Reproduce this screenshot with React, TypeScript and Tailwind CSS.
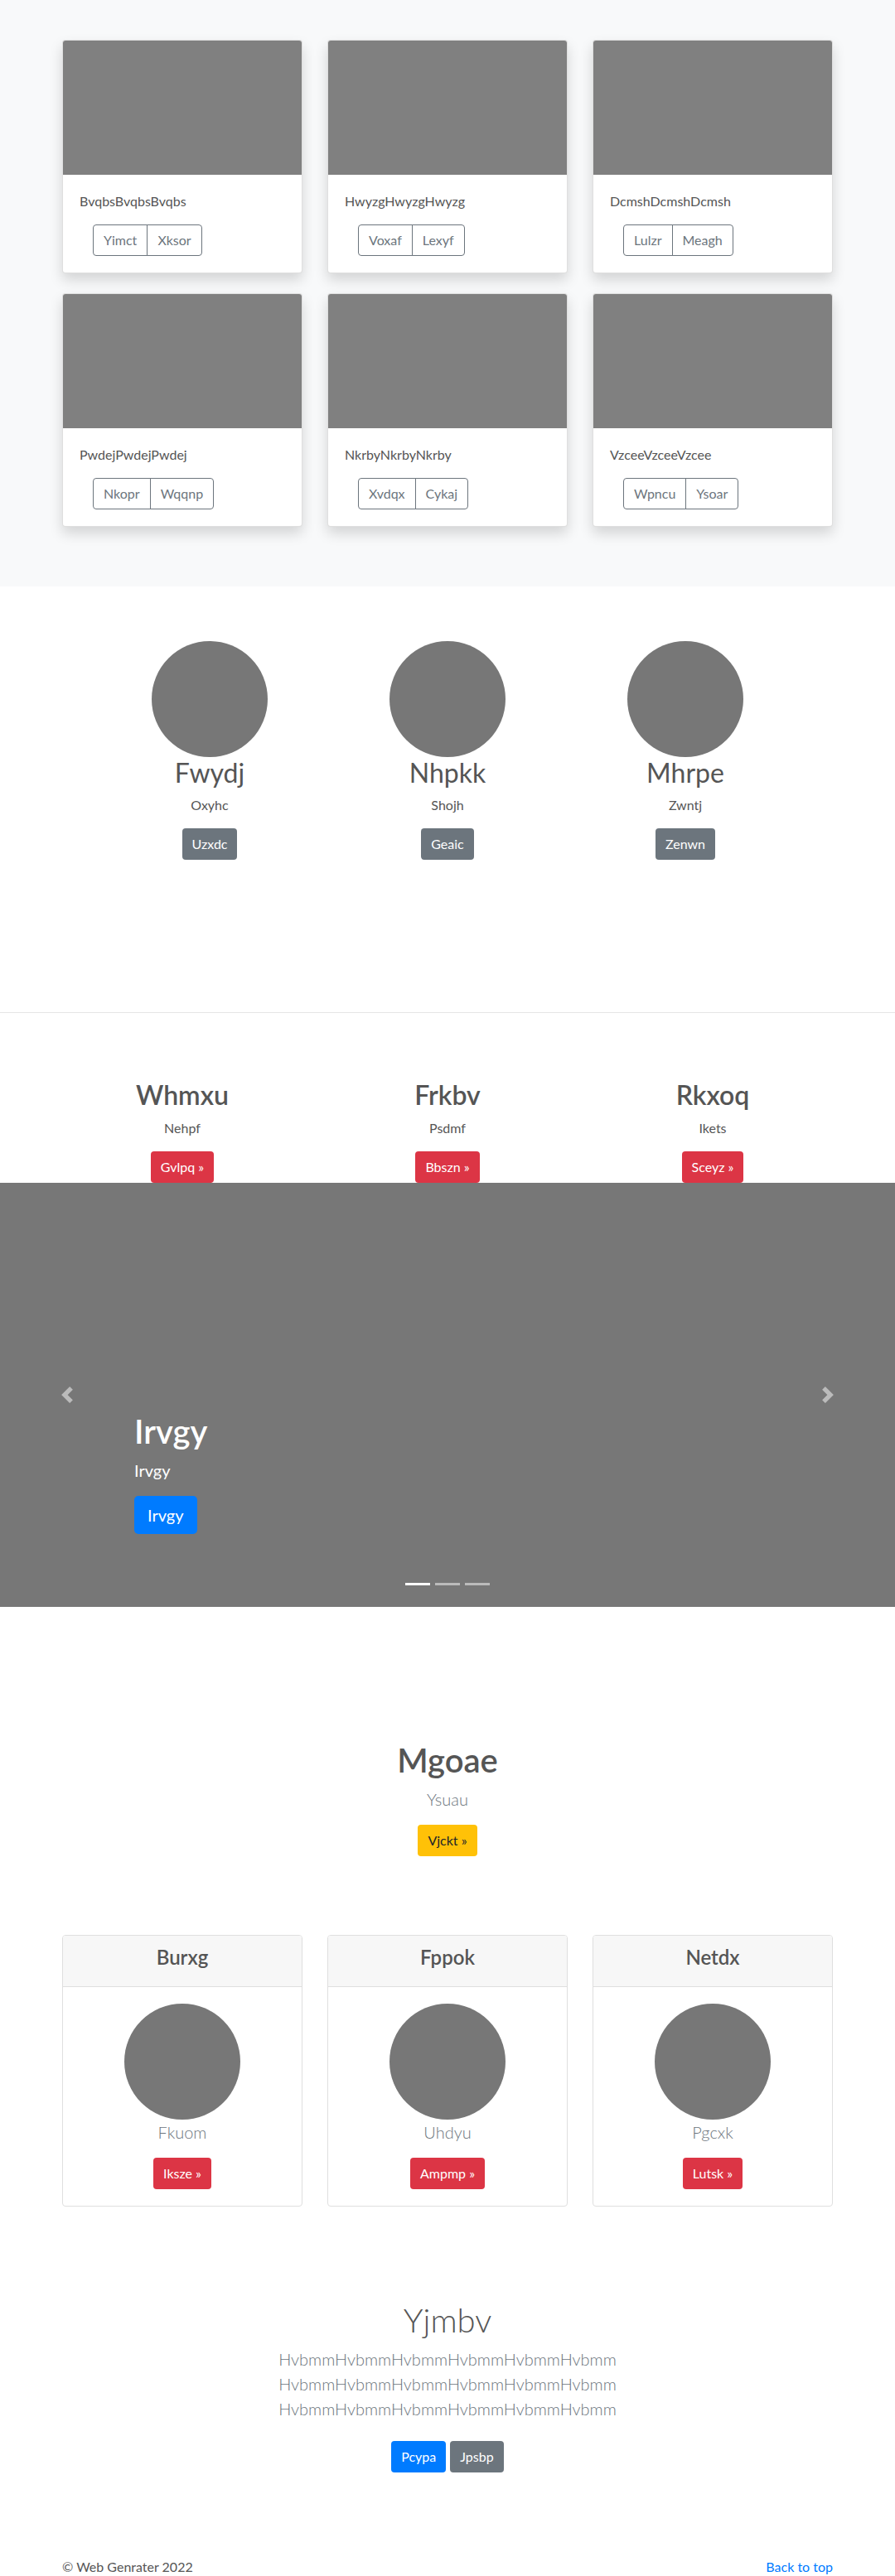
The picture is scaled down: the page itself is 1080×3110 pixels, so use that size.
import React from "react";

const cards1 = [
  ["BvqbsBvqbsBvqbs", "Yimct", "Xksor"],
  ["HwyzgHwyzgHwyzg", "Voxaf", "Lexyf"],
  ["DcmshDcmshDcmsh", "Lulzr", "Meagh"],
  ["PwdejPwdejPwdej", "Nkopr", "Wqqnp"],
  ["NkrbyNkrbyNkrby", "Xvdqx", "Cykaj"],
  ["VzceeVzceeVzcee", "Wpncu", "Ysoar"],
];

const people = [
  ["Fwydj", "Oxyhc", "Uzxdc"],
  ["Nhpkk", "Shojh", "Geaic"],
  ["Mhrpe", "Zwntj", "Zenwn"],
];

const features = [
  ["Whmxu", "Nehpf", "Gvlpq »"],
  ["Frkbv", "Psdmf", "Bbszn »"],
  ["Rkxoq", "Ikets", "Sceyz »"],
];

const pricing = [
  ["Burxg", "Fkuom", "Iksze »"],
  ["Fppok", "Uhdyu", "Ampmp »"],
  ["Netdx", "Pgcxk", "Lutsk »"],
];

function ChevronLeft() {
  return (
    <svg width="20" height="20" viewBox="0 0 8 8" fill="#fff" className="opacity-50">
      <path d="M5.25 0l-4 4 4 4 1.5-1.5L4.25 4l2.5-2.5L5.25 0z" />
    </svg>
  );
}

function ChevronRight() {
  return (
    <svg width="20" height="20" viewBox="0 0 8 8" fill="#fff" className="opacity-50">
      <path d="M2.75 0l-1.5 1.5L3.75 4l-2.5 2.5L2.75 8l4-4-4-4z" />
    </svg>
  );
}

export default function App() {
  return (
    <div className="font-[Lato,'Open_Sans',sans-serif] text-[#212529] bg-white min-h-[3110px]">
      {/* Album */}
      <section className="bg-[#f8f9fa] pt-12 pb-[72px]">
        <div className="w-[960px] mx-auto px-[15px] grid grid-cols-3 gap-x-[30px] gap-y-6">
          {cards1.map(([t, a, b]) => (
            <div
              key={t}
              className="bg-white border border-[rgba(0,0,0,0.125)] rounded overflow-hidden shadow-[0_8px_16px_rgba(0,0,0,0.15)]"
            >
              <div className="h-[162px] bg-[#808080]" />
              <div className="p-5">
                <p className="text-base leading-6 text-[#555] mb-4">{t}</p>
                <div className="ml-4 inline-flex">
                  <button className="h-[38px] px-3 text-base leading-6 text-[#6c757d] border border-[#6c757d] rounded-l">
                    {a}
                  </button>
                  <button className="h-[38px] px-3 text-base leading-6 text-[#6c757d] border border-[#6c757d] -ml-px rounded-r">
                    {b}
                  </button>
                </div>
              </div>
            </div>
          ))}
        </div>
      </section>

      {/* People */}
      <section className="pt-[66px] pb-[184px]">
        <div className="w-[861px] mx-auto grid grid-cols-3 text-center">
          {people.map(([n, s, b]) => (
            <div key={n} className="flex flex-col items-center">
              <div className="w-[140px] h-[140px] rounded-full bg-[#777]" />
              <h2 className="text-[32px] leading-[1.2] font-normal text-[#555] mb-2">{n}</h2>
              <p className="text-base leading-6 text-[#555] mb-4">{s}</p>
              <button className="h-[38px] px-3 text-base leading-6 text-white bg-[#6c757d] rounded">{b}</button>
            </div>
          ))}
        </div>
      </section>

      <div className="h-px bg-[#e5e5e5]" />

      {/* Features */}
      <section className="pt-[80px]">
        <div className="w-[960px] mx-auto grid grid-cols-3 text-center">
          {features.map(([n, s, b]) => (
            <div key={n} className="flex flex-col items-center">
              <h2 className="text-[32px] leading-[1.2] font-semibold text-[#555] mb-2">{n}</h2>
              <p className="text-base leading-6 text-[#555] mb-4">{s}</p>
              <button className="h-[38px] px-3 text-base leading-6 text-white bg-[#dc3545] rounded">{b}</button>
            </div>
          ))}
        </div>
      </section>

      {/* Carousel */}
      <section className="relative h-[512px] bg-[#777]">
        <div className="absolute left-0 top-0 bottom-0 w-[15%] flex items-center justify-center">
          <ChevronLeft />
        </div>
        <div className="absolute right-0 top-0 bottom-0 w-[15%] flex items-center justify-center">
          <ChevronRight />
        </div>
        <div className="absolute left-[15%] right-[15%] bottom-[88px] text-left text-white">
          <h1 className="text-[40px] leading-[1.2] font-semibold mb-2">Irvgy</h1>
          <p className="text-[20px] leading-[30px] mb-4">Irvgy</p>
          <button className="px-4 py-2 text-[20px] leading-[30px] text-white bg-[#007bff] rounded-[5px]">Irvgy</button>
        </div>
        <div className="absolute left-0 right-0 bottom-[26px] flex justify-center gap-[6px]">
          <span className="w-[30px] h-[3px] bg-white" />
          <span className="w-[30px] h-[3px] bg-white/50" />
          <span className="w-[30px] h-[3px] bg-white/50" />
        </div>
      </section>

      {/* Heading */}
      <section className="pt-[161px] text-center flex flex-col items-center">
        <h1 className="text-[40px] leading-[1.2] font-semibold text-[#555] mb-2">Mgoae</h1>
        <p className="text-[20px] leading-[30px] font-light text-[#6c757d] mb-4">Ysuau</p>
        <button className="h-[38px] px-3 text-base leading-6 text-[#212529] bg-[#ffc107] rounded">Vjckt »</button>
      </section>

      {/* Pricing */}
      <section className="pt-[95px]">
        <div className="w-[960px] mx-auto px-[15px] grid grid-cols-3 gap-x-[30px] text-center">
          {pricing.map(([h, s, b]) => (
            <div key={h} className="border border-[#dfdfdf] rounded overflow-hidden">
              <div className="bg-[#f7f7f7] border-b border-[#dfdfdf] px-5 py-3">
                <h4 className="text-[24px] leading-[1.2] font-semibold text-[#555] mb-2">{h}</h4>
              </div>
              <div className="p-5 flex flex-col items-center">
                <div className="w-[140px] h-[140px] rounded-full bg-[#777]" />
                <p className="text-[20px] leading-[30px] font-light text-[#6c757d] mb-4">{s}</p>
                <button className="h-[38px] px-3 text-base leading-6 text-white bg-[#dc3545] rounded">{b}</button>
              </div>
            </div>
          ))}
        </div>
      </section>

      {/* Jumbotron-ish */}
      <section className="pt-[113px] text-center flex flex-col items-center">
        <h1 className="text-[40px] leading-[1.2] font-light text-[#555] mb-2">Yjmbv</h1>
        <p className="text-[20px] leading-[30px] font-light text-[#6c757d] mb-4">
          <span className="block">HvbmmHvbmmHvbmmHvbmmHvbmmHvbmm</span>
          <span className="block">HvbmmHvbmmHvbmmHvbmmHvbmmHvbmm</span>
          <span className="block">HvbmmHvbmmHvbmmHvbmmHvbmmHvbmm</span>
        </p>
        <div className="flex gap-[5px] my-2">
          <button className="h-[38px] px-3 text-base leading-6 text-white bg-[#007bff] rounded">Pcypa</button>
          <button className="h-[38px] px-3 text-base leading-6 text-white bg-[#6c757d] rounded">Jpsbp</button>
        </div>
      </section>

      {/* Footer */}
      <footer className="pt-[94px] pb-2">
        <div className="w-[960px] mx-auto px-[15px] flex justify-between text-base leading-6">
          <p className="text-[#555]">© Web Genrater 2022</p>
          <a className="text-[#007bff]" href="#">Back to top</a>
        </div>
      </footer>
    </div>
  );
}
